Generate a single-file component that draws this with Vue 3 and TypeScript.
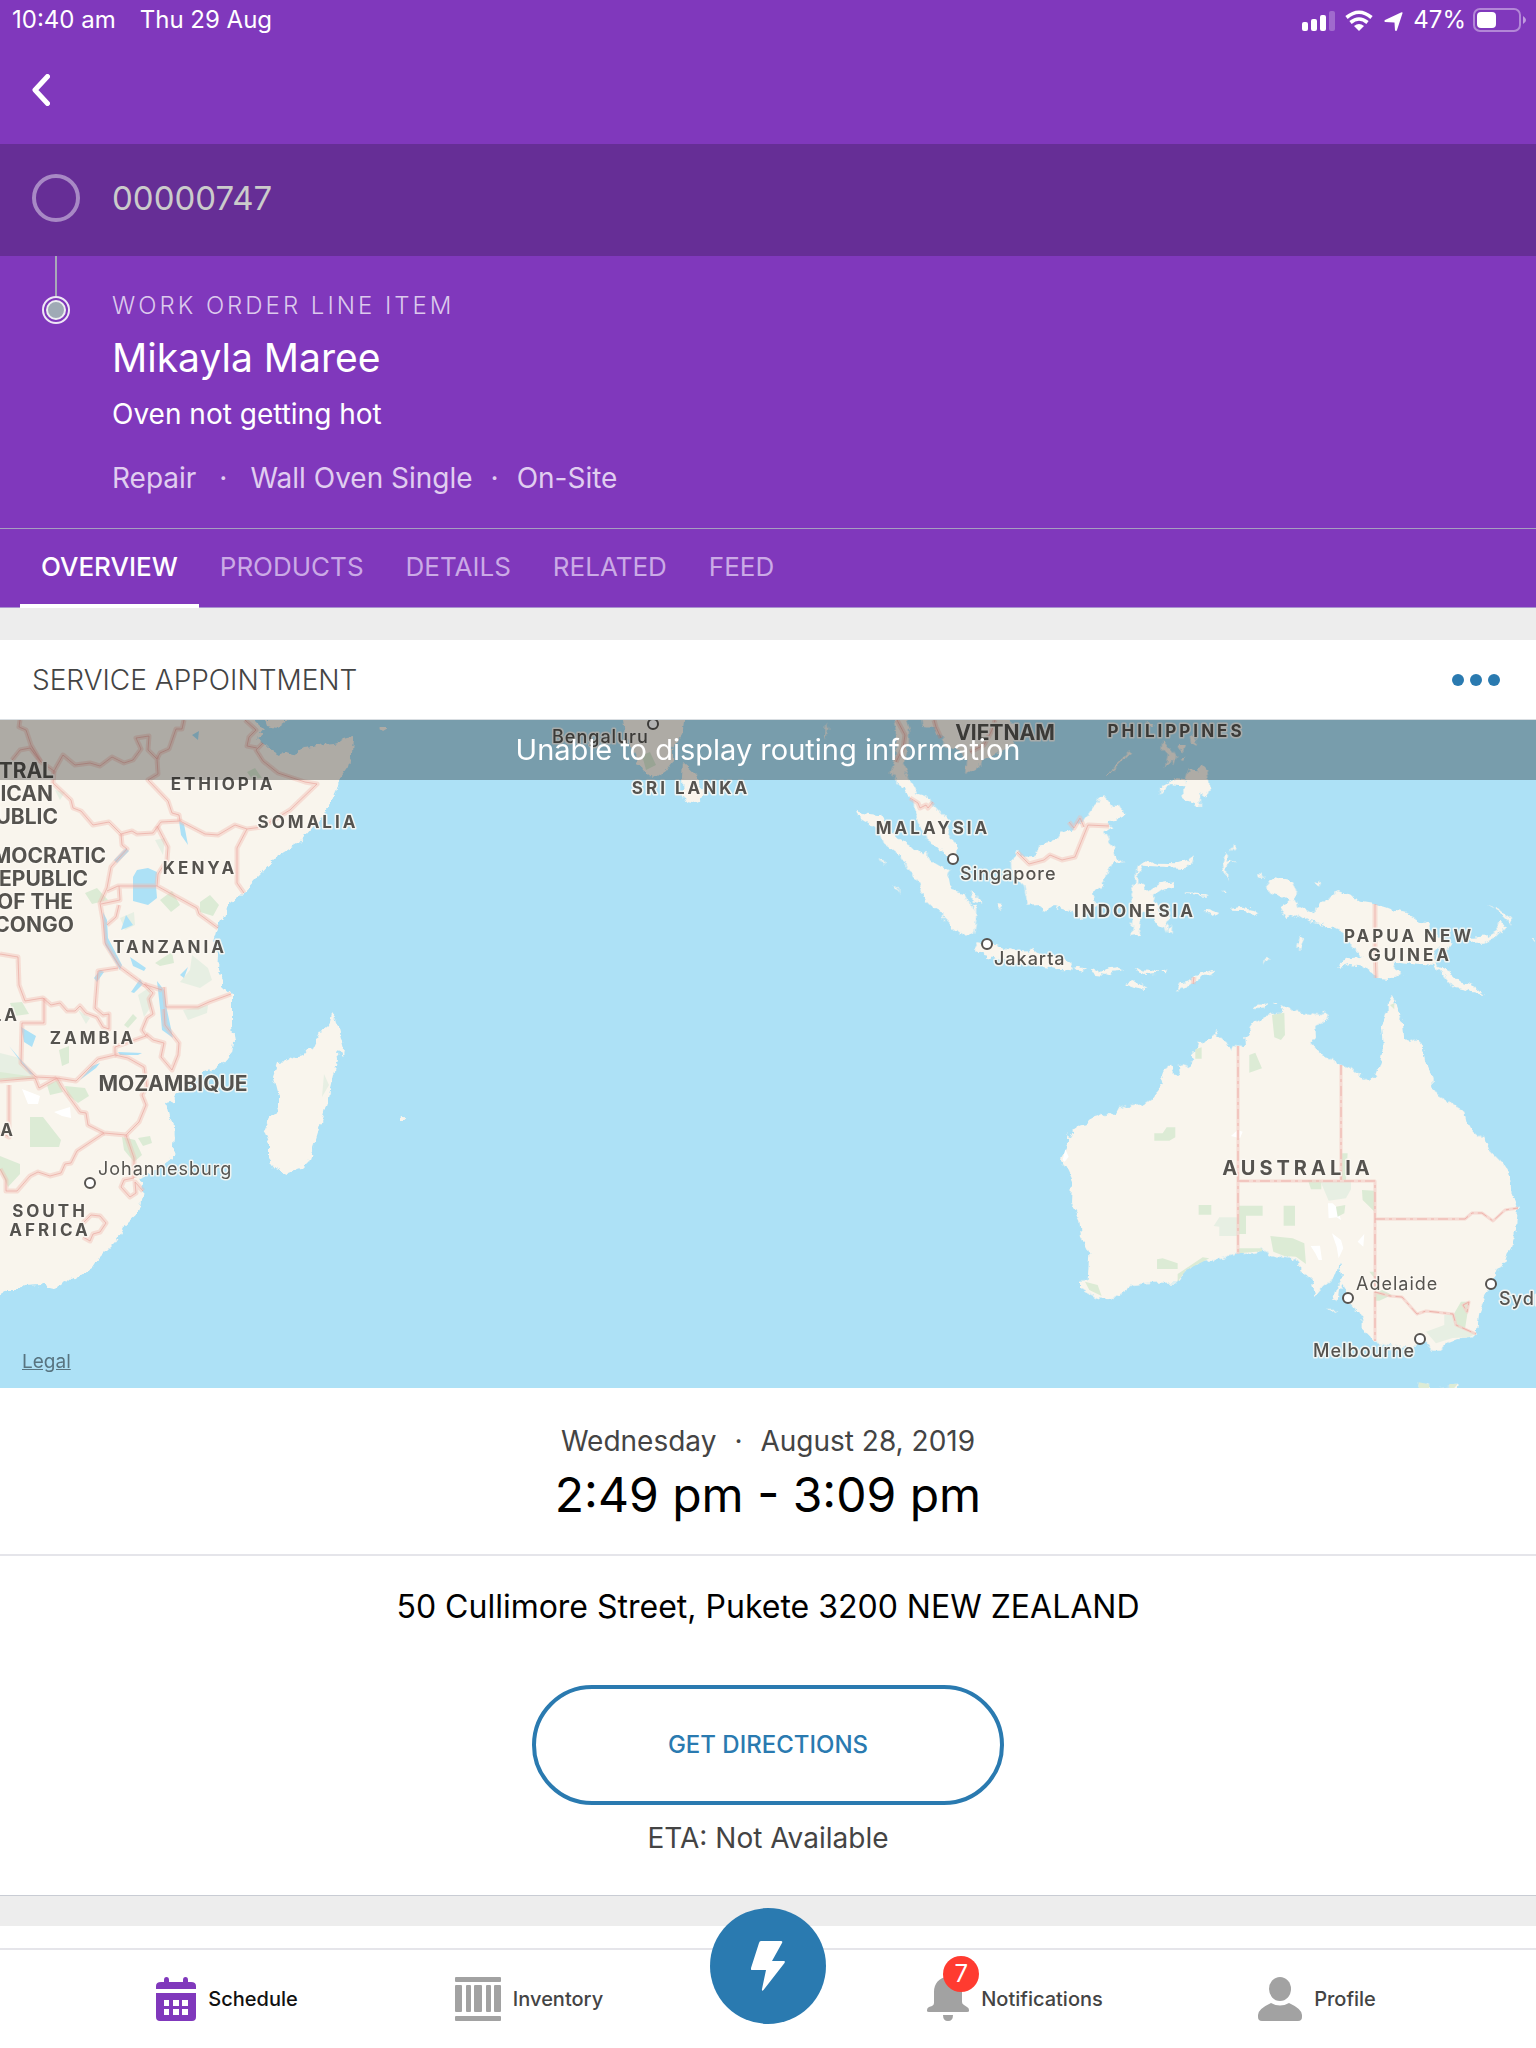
<script setup lang="ts">
import { ref } from 'vue'

interface MapLabel {
  text: string
  x: number
  y: number
  kind: 'country' | 'major' | 'continent' | 'city' | 'minor'
  anchor?: 'start' | 'middle' | 'end'
}

const tabs = ['OVERVIEW', 'PRODUCTS', 'DETAILS', 'RELATED', 'FEED']
const activeTab = ref('OVERVIEW')

const labels: MapLabel[] = [
  { text: 'CENTRAL', x: 54, y: 778, kind: 'major', anchor: 'end' },
  { text: 'AFRICAN', x: 53, y: 801, kind: 'major', anchor: 'end' },
  { text: 'REPUBLIC', x: 58, y: 824, kind: 'major', anchor: 'end' },
  { text: 'DEMOCRATIC', x: 106, y: 863, kind: 'major', anchor: 'end' },
  { text: 'REPUBLIC', x: 88, y: 886, kind: 'major', anchor: 'end' },
  { text: 'OF THE', x: 73, y: 909, kind: 'major', anchor: 'end' },
  { text: 'CONGO', x: 74, y: 932, kind: 'major', anchor: 'end' },
  { text: 'ETHIOPIA', x: 223, y: 790, kind: 'country' },
  { text: 'SOMALIA', x: 308, y: 828, kind: 'country' },
  { text: 'KENYA', x: 200, y: 874, kind: 'country' },
  { text: 'TANZANIA', x: 170, y: 953, kind: 'country' },
  { text: 'ANGOLA', x: 20, y: 1021, kind: 'country', anchor: 'end' },
  { text: 'ZAMBIA', x: 93, y: 1044, kind: 'country' },
  { text: 'MOZAMBIQUE', x: 173, y: 1091, kind: 'major' },
  { text: 'NAMIBIA', x: 16, y: 1136, kind: 'country', anchor: 'end' },
  { text: 'SOUTH', x: 50, y: 1217, kind: 'country' },
  { text: 'AFRICA', x: 50, y: 1236, kind: 'country' },
  { text: 'SRI LANKA', x: 691, y: 794, kind: 'country' },
  { text: 'VIETNAM', x: 1005, y: 740, kind: 'major' },
  { text: 'PHILIPPINES', x: 1176, y: 737, kind: 'country' },
  { text: 'MALAYSIA', x: 933, y: 834, kind: 'country' },
  { text: 'INDONESIA', x: 1135, y: 917, kind: 'country' },
  { text: 'PAPUA NEW', x: 1409, y: 942, kind: 'country' },
  { text: 'GUINEA', x: 1410, y: 961, kind: 'country' },
  { text: 'AUSTRALIA', x: 1298, y: 1175, kind: 'continent' },
  { text: 'Johannesburg', x: 98, y: 1175, kind: 'minor', anchor: 'start' },
  { text: 'Adelaide', x: 1356, y: 1290, kind: 'minor', anchor: 'start' },
  { text: 'Bengaluru', x: 552, y: 743, kind: 'city', anchor: 'start' },
  { text: 'Singapore', x: 960, y: 880, kind: 'city', anchor: 'start' },
  { text: 'Jakarta', x: 994, y: 965, kind: 'city', anchor: 'start' },
  { text: 'Melbourne', x: 1313, y: 1357, kind: 'city', anchor: 'start' },
  { text: 'Sydney', x: 1499, y: 1305, kind: 'city', anchor: 'start' },
]

const pins: [number, number][] = [
  [90, 1183], [653, 724], [953, 859], [987, 944], [1348, 1298], [1491, 1284], [1420, 1339],
]

// National borders, in map units
const borders = [
  'M20 720 19 727 26 730 31 745 41 762 54 771 63 755 75 765 90 763 100 766 112 757 124 763 133 760 141 749 136 738 149 736 148 750 157 759 158 774 148 780 168 801 172 813 179 815 180 821',
  'M12 760 20 750 30 748 41 762M184 720 182 729 176 729 169 749 160 753 157 759',
  'M54 771 53 783 71 800 73 808 81 811 93 825 109 822 121 834 132 831 137 834 153 833 161 822 180 821 205 834 218 835 235 825 247 829 262 827 290 810 317 784 305 782 278 773 263 761 256 750 263 743M245 720 256 730 249 737 247 746 257 748M247 829 237 848 237 883 244 893',
  'M121 834 122 845 127 849 111 867 107 888 100 903 103 920 105 943 120 967 143 984 162 990M157 826 168 847 167 860 158 874 157 886 118 886 107 891M157 886 197 908 199 914 218 928M119 886 120 900 101 904M119 905 116 917 107 925',
  'M0 954 18 957 19 985 25 1001 43 998 51 1005 60 1003 67 1011 75 1011 80 1006 86 1013 97 1017 103 1027 109 1029 109 1014 103 1015 95 1008 98 971 118 968',
  'M44 998 44 1023 22 1023 21 1063 36 1077 57 1078 76 1081 98 1059 115 1055 115 1047 146 1036 142 1030 147 1018 153 1014 149 999 153 993 144 984',
  'M164 987 166 1007 198 1007 209 1002 231 994M164 1009 165 1025 179 1043 178 1055 172 1070 161 1057 164 1043 153 1040 146 1034M115 1055 128 1058 144 1067 147 1087 142 1095 146 1105 139 1122 126 1135 104 1133 88 1125 86 1113 80 1112 62 1087 57 1078',
  'M0 1081 35 1078 39 1088 57 1078M9 1085 9 1137 0 1132M104 1133 77 1151 71 1163 65 1164 61 1173 50 1176 38 1172 30 1176 17 1191 6 1191 6 1180 0 1169M126 1135 134 1158 134 1178',
  'M134 1178 124 1180 121 1187 130 1197 136 1193 135 1182 143 1191M82 1224 91 1215 100 1216 106 1223 100 1232 93 1234 90 1241 83 1237',
  'M897 720 905 735 903 748 896 762M934 720 936 727 941 738M995 720 992 730 984 745 970 752M910 798 918 803 920 808 926 805 928 808 933 802',
  'M1017 852 1029 864 1044 860 1050 855 1062 860 1075 857 1088 825 1109 826M1069 822 1074 828 1080 818 1084 827M1375 904 1375 949 1376 978M1194 977 1193 984',
]

// State lines inside Australia
const stateLines =
  'M1238 1046V1254M1341 1065V1181M1239 1181H1375V1341M1375 1219H1465L1472 1213 1482 1213 1493 1221 1505 1210 1518 1208M1375 1292 1390 1296 1402 1297 1417 1314 1426 1311 1453 1314 1456 1325 1476 1334M1463 1305 1469 1302 1467 1312Z'

const coast =
  'M-10 710H245L263 728 259 733 263 736 257 739 263 743 270 750 279 755 286 752 293 754 303 748 312 747 322 744 333 743 348 739 353 738 352 753 349 760 348 767 337 783 333 797 328 807 322 818 313 827 297 845 290 849 277 857 257 878 243 893 238 898 230 903 225 917 221 921 217 928 213 943 213 951 219 955 218 970 223 979 223 987 232 995 232 1027 234 1042 232 1053 222 1065 212 1070 203 1072 187 1088 177 1095 174 1101 166 1103 170 1118 174 1125 175 1137 173 1157 157 1170 138 1178 144 1183 143 1197 139 1212 127 1223 122 1233 115 1243 100 1258 92 1268 78 1277 71 1281 65 1280 61 1284 53 1287 40 1284 25 1285 18 1290 7 1290-10 1300ZM265 720 267 726 277 728 288 720ZM380 728 389 728 384 731ZM331 1013 337 1020 340 1033 344 1049 343 1057 338 1050 336 1052 337 1060 333 1075 328 1097 322 1120 315 1143 308 1163 303 1168 297 1169 287 1173 275 1168 269 1160 269 1145 264 1133 267 1125 278 1107 278 1097 273 1077 278 1062 287 1061 293 1057 302 1055 308 1048 312 1049 317 1038 320 1036 317 1031 325 1030 328 1025ZM622 715 625 733 634 753 643 770 654 779 664 772 673 760 673 750 682 735 685 715ZM683 762 695 773 702 790 700 800 687 805 683 797 682 777Z'
</script>

<template>
  <div class="page">
    <header class="hero">
      <div class="status">
        <div class="status-group">
          <span>10:40 am</span>
          <span>Thu 29 Aug</span>
        </div>
        <div class="status-group right">
          <svg class="status-icons" width="102" height="24" viewBox="0 0 102 24" fill="#fff" aria-hidden="true">
            <rect x="0" y="14" width="6" height="9" rx="2" />
            <rect x="9" y="11" width="6" height="12" rx="2" />
            <rect x="18" y="7" width="6" height="16" rx="2" />
            <rect x="27" y="3" width="6" height="20" rx="2" opacity=".25" />
            <path d="M57 23 52 18Q57 14 62 18Z" />
            <path d="M48.500 14.500Q57 7.500 65.500 14.500M44.500 9.500Q57-1 69.500 9.500" fill="none" stroke="#fff" stroke-width="3.600" />
            <path d="M100.500 5.300 95 22Q94.500 23.500 93 22.500L92.500 14.500 83 14Q81.500 13 83 12L99 4.500Q101 4 100.500 5.300Z" />
          </svg>
          <span>47%</span>
          <svg width="54" height="24" viewBox="0 0 54 24" aria-hidden="true">
            <rect x="1" y="1" width="46" height="22" rx="6" fill="none" stroke="#fff" stroke-opacity=".4" stroke-width="2" />
            <rect x="4" y="4" width="19" height="16" rx="4" fill="#fff" />
            <path d="M50 8Q56 12 50 16Z" fill="#fff" fill-opacity=".5" />
          </svg>
        </div>
      </div>

      <div class="nav">
        <button class="back" type="button" aria-label="Back">
          <svg width="18" height="32" viewBox="0 0 18 32" fill="none" stroke="#fff" stroke-width="5" stroke-linecap="round" stroke-linejoin="round" aria-hidden="true">
            <path d="M15.500 2.500 3 16 15.500 29.500" />
          </svg>
        </button>
      </div>

      <div class="parent">
        <span class="ring"></span>
        <span class="number">00000747</span>
      </div>

      <div class="item">
        <div class="rail">
          <span class="stem"></span>
          <svg width="28" height="28" viewBox="0 0 28 28" aria-hidden="true">
            <circle cx="14" cy="14" r="13" fill="none" stroke="#eee6f6" stroke-width="2" />
            <circle cx="14" cy="14" r="9" fill="#9faab5" stroke="#eeeef2" stroke-width="2" />
          </svg>
        </div>
        <div class="summary">
          <p class="kicker">WORK ORDER LINE ITEM</p>
          <h1>Mikayla Maree</h1>
          <p class="problem">Oven not getting hot</p>
          <p class="facts"><span>Repair</span><i class="wide">·</i><span>Wall Oven Single</span><i>·</i><span>On-Site</span></p>
        </div>
      </div>

      <nav class="tabs" aria-label="Record sections">
        <button v-for="tab in tabs" :key="tab" type="button" :class="['tab', { active: tab === activeTab }]" @click="activeTab = tab">
          {{ tab }}
        </button>
      </nav>
    </header>

    <main>
      <section class="card">
        <div class="card-head">
          <h2>SERVICE APPOINTMENT</h2>
          <button class="more" type="button" aria-label="More actions">
            <svg width="48" height="12" viewBox="0 0 48 12" fill="#2a7ab0" aria-hidden="true">
              <circle cx="6" cy="6" r="6" /><circle cx="24" cy="6" r="6" /><circle cx="42" cy="6" r="6" />
            </svg>
          </button>
        </div>

        <div class="map">
          <svg class="canvas" viewBox="0 720 1536 668" role="img" aria-label="Map of the Indian Ocean">
            <defs>
              <!-- Breaks straight outlines into a ragged shoreline -->
              <filter id="shore" filterUnits="userSpaceOnUse" x="-10" y="710" width="1560" height="690">
                <feTurbulence type="fractalNoise" baseFrequency=".12" numOctaves="3" seed="4" />
                <feDisplacementMap in="SourceGraphic" scale="8" xChannelSelector="R" yChannelSelector="G" />
              </filter>
            </defs>
            <rect y="720" width="1536" height="668" fill="#ade1f6" />
            <g fill="#f9f5ed" filter="url(#shore)">
              <path :d="coast" />
              <ellipse cx="403" cy="1119" rx="3" ry="2" />
              <!-- South-East Asia -->
              <g transform="translate(820 700) scale(.4566 .3333)">
                <path d="M160 45 168 110 165 170 155 220 170 250 205 300 206 325 210 340 215 370 232 400 235 425 275 460 290 472 298 468 300 440 280 400 278 360 250 320 240 295 215 285 200 250 190 215 180 190 195 130 195 90 185 45Z" />
                <path d="M220 45 225 80 250 85 265 115 275 140 305 150 320 175 318 222 355 195 360 175 400 150 425 125 428 100 415 45Z" />
                <path d="M80 332 105 342 135 346 150 390 165 410 195 430 225 470 232 455 240 480 265 500 285 512 280 530 290 570 315 580 325 605 342 625 342 660 337 705 325 712 305 700 260 640 225 590 216 550 205 530 175 465 140 430 130 390 90 358Z" />
                <path d="M337 748 345 730 385 735 420 750 455 755 465 743 475 755 500 765 545 785 552 812 500 800 430 790 380 775 360 768Z" />
                <path d="M620 288 640 320 655 320 660 335 673 340 650 355 650 365 628 370 640 382 625 395 635 430 642 440 645 470 664 487 640 490 632 510 625 540 605 570 600 580 605 610 570 655 540 630 510 618 490 635 485 615 455 617 447 560 420 520 418 490 432 452 450 470 470 468 478 435 495 430 520 415 530 395 550 385 580 360 598 325 610 310 612 292Z" />
                <path d="M690 550 693 500 715 478 740 488 780 490 800 485 820 465 815 485 800 505 750 500 705 497 697 515 697 548 710 560 722 572 745 550 775 543 770 562 750 570 740 580 725 582 740 610 745 640 768 650 755 680 735 675 730 640 705 630 702 670 698 705 680 708 685 650 680 580Z" />
                <path d="M980 545 1000 535 1035 545 1045 570 1042 600 1048 620 1060 630 1080 640 1092 615 1110 602 1117 585 1135 573 1165 590 1185 605 1215 612 1240 622 1260 632 1285 640 1310 660 1330 672 1340 700 1385 735 1380 745 1350 750 1345 775 1355 800 1385 820 1400 845 1430 858 1452 883 1420 872 1385 862 1370 835 1345 795 1300 790 1260 785 1255 805 1275 820 1255 835 1215 830 1190 800 1160 795 1135 805 1145 785 1160 775 1190 770 1160 735 1150 700 1120 680 1070 665 1040 640 1020 655 1008 622 1030 605 1010 590 985 580Z" />
                <path d="M1420 715 1465 708 1485 692 1482 668 1493 665 1500 682 1480 710 1455 728 1430 728ZM1460 612 1490 630 1515 658 1516 678 1508 660 1488 634ZM1562 710 1568 715V732Z" />
                <path d="M782 872 792 850 815 840 830 820 872 808 850 825 830 838 805 862ZM668 850 685 843 705 852 712 868 692 862ZM555 803 570 800 582 808 575 815ZM595 815 600 805 612 815 635 808 660 803 665 812 640 815 625 828 605 825ZM692 815 705 808 730 812 745 818 710 822ZM747 818 765 808 760 820Z" />
                <path d="M845 635 855 627 872 636 862 648ZM895 628 925 620 950 628 962 645 935 634 905 632ZM1052 708 1060 715 1052 750 1045 745ZM978 768 984 772 972 792ZM905 432 910 440 900 455ZM888 458 896 470 892 485 908 480 890 500 892 525 898 545 886 520 882 490ZM955 522 970 524 970 530 958 530ZM802 580 848 583 848 587 802 585ZM1080 545 1095 552 1092 560ZM878 572 890 572 890 578Z" />
                <path d="M330 575 342 578 345 600 358 615 335 605ZM387 612 400 615 392 628ZM128 470 140 485 142 500ZM162 555 172 565 175 580ZM755 680 762 672 760 700ZM762 690 771 672 770 700Z" />
                <path d="M745 282 745 262 765 248 780 240 800 244 808 210 825 218 835 195 848 215 855 262 847 290 832 275 832 322 808 308 797 295 795 258 765 252ZM750 120 762 140 775 165 765 190 755 200 762 165 748 145ZM775 150 780 170 772 200 770 170ZM785 135 800 135 795 155ZM800 172 795 190 788 182ZM810 105 825 115 825 138 812 128ZM715 65 730 70 725 82ZM680 150 683 158 650 200 628 228 625 225 655 185ZM15 62 18 90 12 120 13 90Z" />
              </g>
              <!-- Australia -->
              <g transform="translate(1036 980) scale(.3333)">
                <path d="M97 452 93 465 108 472 115 452 135 438 150 436 172 412 195 402 235 402 242 392 268 380 330 372 345 362 360 340 385 308 378 285 385 268 403 258 415 285 425 285 432 272 428 250 460 262 475 240 465 225 480 210 483 185 500 190 510 180 540 156 558 175 575 190 585 212 590 195 615 197 630 205 628 170 645 155 640 145 655 125 690 108 735 98 740 73 770 90 820 100 855 108 865 95 876 103 860 130 838 138 840 170 825 190 840 205 870 232 890 235 915 253 950 265 965 280 985 297 1017 287 1025 265 1035 235 1043 190 1038 140 1050 98 1058 92 1058 65 1068 50 1078 60 1085 100 1100 120 1105 175 1120 182 1135 175 1160 200 1168 245 1190 290 1190 315 1198 340 1240 365 1285 395 1292 425 1308 455 1330 475 1345 470 1360 510 1400 550 1425 590 1430 640 1446 685 1440 750 1425 800 1408 850 1385 868 1370 910 1345 960 1330 1000 1322 1060 1310 1072 1260 1074 1240 1088 1215 1112 1190 1112 1165 1085 1140 1100 1080 1100 1015 1085 980 1050 980 1020 955 975 930 975 930 940 920 912 912 925 908 960 885 962 897 950 902 925 915 905 918 880 910 852 905 875 890 900 855 925 838 948 825 900 790 870 790 848 765 835 720 830 685 812 608 820 550 838 500 845 450 870 420 908 350 908 290 915 265 935 250 945 220 957 190 955 150 935 135 925 135 902 155 900 160 820 135 770 130 720 105 670 108 600 78 535 95 500Z" />
                <path d="M652 78 670 70 690 72 685 82 660 84ZM710 68 725 68 720 74ZM870 990 905 990 890 998ZM1148 1207 1180 1218 1190 1240H1148ZM1215 1222 1265 1210 1260 1240H1215Z" />
              </g>
            </g>
            <path transform="translate(1036 980) scale(.3333)" fill="#fff" d="M80 540 88 508 98 530 86 545ZM585 468 605 450 620 455 612 475ZM876 670 890 670 905 685 915 720 902 712 878 715ZM888 760 915 780 922 805 908 835 902 800ZM824 798 852 797 858 840 848 840 838 820ZM965 785 985 762 982 800Z" />
            <!-- Parks and reserves -->
            <g fill="#dcebd5">
              <path d="M160 900 172 891 180 905 171 912ZM200 902 210 895 219 905 213 916 200 912ZM85 893 97 888 108 900 92 904ZM155 963 172 952 174 963 160 966ZM10 1003 22 1002 29 1014 15 1016ZM59 1050 69 1046 69 1063 62 1066ZM124 1025 133 1014 137 1018 128 1028ZM0 1068 30 1072 35 1079 0 1080ZM47 1085 58 1080 63 1092 50 1095ZM65 1086 85 1088 89 1096 78 1103 68 1095ZM30 1117H43L61 1140 59 1147H30ZM0 1156 20 1164 20 1174 8 1187 0 1170ZM122 1137 135 1140 142 1155 134 1162 124 1150ZM138 1138 150 1136 152 1143 143 1146ZM247 772 255 768 262 778 252 779ZM642 755 650 752 656 765 646 770Z" />
              <g transform="translate(1036 980) scale(.3333)">
                <path d="M355 460H380L392 442H418V472L400 482H355ZM478 208 497 202V236H478ZM708 105 745 98 747 165 735 180 715 172ZM640 225 658 218 678 265 640 278ZM488 675H526V704H488ZM608 677H680V707H630V762H608ZM743 677H777V737H743ZM816 600H856V628H825ZM978 630 1016 632V695L980 660ZM703 768 770 775 805 790 810 852 780 830 745 828 712 815ZM608 805H678V814L608 820ZM363 838 380 835 425 850V867H363ZM425 882 500 832 520 835 500 845 450 870 425 905ZM147 905 185 915 197 948 160 930ZM1000 875 1016 875V895ZM1016 935 1040 930 1068 945 1030 962H1016ZM1255 1000 1275 965 1300 965 1285 1060 1260 1040ZM1148 1207 1180 1213 1180 1224H1148ZM1240 1212 1265 1212 1255 1224H1240ZM917 520H935L930 600H915ZM900 680 928 675 925 700 905 710ZM1062 75 1075 70 1075 88Z" />
              </g>
            </g>
            <g fill="#e7efe3">
              <path d="M192 955 208 968 212 980 200 988 180 982 190 970ZM120 918 134 912 135 925 125 930ZM138 995 150 987 152 1005 144 1017ZM183 1010 208 1005 207 1013 188 1020ZM0 1053 20 1058 36 1077 0 1072ZM324 1074 329 1085 322 1097ZM155 840 165 838 163 855ZM55 790 65 792 60 800ZM78 1010 90 1018 86 1024Z" />
              <path transform="translate(1036 980) scale(.3333)" d="M853 603H945V628L930 655 878 662ZM550 712H608V768H550V740L533 738ZM1170 1055 1225 1035 1225 1005 1255 1000 1262 1040 1322 1060 1300 1072 1250 1074 1200 1090Z" />
            </g>
            <!-- Lakes -->
            <g fill="#ade1f6">
              <path d="M133 877 137 870 148 868 157 872 156 886 157 898 148 905 133 901ZM179 821 184 824 188 845 181 835ZM114 860 126 848 129 851 117 863ZM103 912 107 920 108 938 122 965 120 970 105 945ZM126 915 133 925 121 930ZM130 957 146 968 144 971 133 966ZM180 975 188 967 184 978ZM94 978 100 970 104 972 97 982ZM131 992 140 979 143 984 134 993ZM157 981 164 990 167 1010 173 1038 162 1030 160 1008ZM80 1080 92 1066 100 1063 96 1068ZM118 1052 142 1053 138 1055 120 1055ZM21 1027 36 1036 32 1047 24 1042ZM9 1046 34 1075 30 1074ZM192 735 199 731 198 740Z" />
            </g>
            <path fill="#fff" d="M22 1089 40 1096 38 1104 28 1104ZM54 1112 70 1107 71 1118 62 1116Z" />
            <g fill="none" stroke-linejoin="round">
              <path v-for="d in borders" :key="`halo-${d}`" :d="d" stroke="#f3b9b0" stroke-opacity=".4" stroke-width="5" />
              <path v-for="d in borders" :key="d" :d="d" stroke="#e8a49d" stroke-opacity=".65" />
              <path :d="stateLines" stroke="#f5cfc7" stroke-opacity=".7" stroke-width="3" />
              <path :d="stateLines" stroke="#eba8a0" stroke-opacity=".8" stroke-dasharray="10 4 3 4" />
            </g>
            <circle v-for="[x, y] in pins" :key="`${x}-${y}`" :cx="x" :cy="y" r="5" fill="#fff" stroke="#565350" stroke-width="2" />
            <text v-for="label in labels" :key="`${label.text}-${label.y}`" :x="label.x" :y="label.y" :text-anchor="label.anchor ?? 'middle'" :class="['label', label.kind]">{{ label.text }}</text>
          </svg>
          <p class="notice">Unable to display routing information</p>
          <a class="legal" href="#legal">Legal</a>
        </div>

        <div class="when">
          <p class="date"><span>Wednesday</span><i>·</i><span>August 28, 2019</span></p>
          <p class="time">2:49 pm - 3:09 pm</p>
        </div>

        <div class="where">
          <p class="address">50 Cullimore Street, Pukete 3200 NEW ZEALAND</p>
          <button class="directions" type="button">GET DIRECTIONS</button>
          <p class="eta">ETA: Not Available</p>
        </div>
      </section>
    </main>

    <nav class="dock" aria-label="Main">
      <a class="dock-item current" href="#schedule">
        <svg width="40" height="44" viewBox="0 0 40 44" fill="#8038bc" aria-hidden="true">
          <path d="M8 5V3Q8 0 10.500 0T13 3V5H27V3Q27 0 29.500 0T32 3V5H35Q40 5 40 9V12H0V9Q0 5 5 5Z" />
          <path fill-rule="evenodd" d="M0 16H40V40Q40 44 36 44H4Q0 44 0 40ZM8 23V29H13V23ZM17 23V29H23V23ZM26 23V29H32V23ZM8 32V38H13V32ZM17 32V38H23V32ZM26 32V38H32V32Z" />
        </svg>
        <span>Schedule</span>
      </a>
      <a class="dock-item" href="#inventory">
        <svg width="46" height="44" viewBox="0 0 46 44" fill="#a2a2a2" aria-hidden="true">
          <rect width="46" height="5" rx="1" /><rect y="39" width="46" height="5" rx="1" />
          <rect y="8" width="7" height="27" rx="1" /><rect x="11" y="8" width="5" height="27" rx="1" />
          <rect x="19" y="8" width="8" height="27" rx="1" /><rect x="31" y="8" width="5" height="27" rx="1" />
          <rect x="39" y="8" width="7" height="27" rx="1" />
        </svg>
        <span>Inventory</span>
      </a>
      <button class="fab" type="button" aria-label="Quick actions">
        <svg width="34" height="50" viewBox="0 0 34 50" fill="#fff" aria-hidden="true">
          <path d="M10 0H30Q32 0 31 2L21 20H33Q34.500 20 33.500 22L12.500 49Q10.500 51 11 48L15 29H1Q-.5 29 0 27L8 2Q8.500 0 10 0Z" />
        </svg>
      </button>
      <a class="dock-item alerts" href="#notifications">
        <span class="bell">
          <svg width="42" height="44" viewBox="0 0 42 44" fill="#a2a2a2" aria-hidden="true">
            <path d="M21 0C12 0 7 7 7 15V26Q7 28 5 29L2 30Q0 31 0 33V34Q0 35 2 35H40Q42 35 42 34V33Q42 31 40 30L37 28Q35 27 35 25V15C35 7 30 0 21 0Z" />
            <path d="M16 38H26Q26 44 21 44T16 38Z" />
          </svg>
          <span class="badge">7</span>
        </span>
        <span>Notifications</span>
      </a>
      <a class="dock-item" href="#profile">
        <svg width="44" height="44" viewBox="0 0 44 44" fill="#a2a2a2" aria-hidden="true">
          <ellipse cx="22" cy="12" rx="11" ry="12" />
          <path d="M13 26Q22 31 31 26Q44 32 44 38V40Q44 44 40 44H4Q0 44 0 40V38Q0 32 13 26Z" />
        </svg>
        <span>Profile</span>
      </a>
    </nav>
  </div>
</template>

<style>
body {
  margin: 0;
}
</style>

<style scoped>
.page {
  display: flex;
  flex-direction: column;
  min-height: 100vh;
  background: #fff;
  color: #444;
  font-family: Inter, Roboto, sans-serif;
  font-size: 28px;
  line-height: 32px;
}

p,
h1,
h2 {
  margin: 0;
  font-weight: 400;
}

i {
  display: inline-block;
  width: 44px;
  font-style: normal;
  text-align: center;
}

button {
  padding: 0;
  border: 0;
  background: none;
  font: inherit;
  cursor: pointer;
}

svg {
  display: block;
}

.hero {
  background: #8038bc;
  color: #fff;
}

.status {
  display: flex;
  justify-content: space-between;
  height: 40px;
  padding: 0 9px 0 12px;
  font-size: 24px;
  line-height: 24px;
}

.status-group {
  display: flex;
  align-items: center;
  gap: 24px;
}

.status-group.right {
  gap: 7px;
}

.status-icons {
  margin-right: 2px;
}

.nav {
  display: flex;
  align-items: center;
  height: 104px;
  padding: 0 32px;
}

.back {
  margin-bottom: 4px;
}

.parent {
  display: flex;
  align-items: center;
  gap: 32px;
  height: 112px;
  padding: 0 32px 4px;
  box-sizing: border-box;
  background: #662e96;
}

.ring {
  width: 48px;
  height: 48px;
  box-sizing: border-box;
  border: 4px solid #a889c5;
  border-radius: 50%;
}

.number {
  color: #cbcbcb;
  font-size: 33px;
}

.item {
  display: flex;
  gap: 32px;
  padding: 0 32px 34px;
}

.rail {
  display: flex;
  flex-direction: column;
  align-items: center;
  width: 48px;
}

.stem {
  width: 2px;
  height: 40px;
  background: #a8a8b8;
}

.summary {
  padding-top: 34px;
}

.kicker {
  color: #dcc9ed;
  font-size: 24px;
  font-weight: 300;
  letter-spacing: 3px;
}

h1 {
  padding: 12px 0 16px;
  font-size: 39px;
  line-height: 48px;
}

.facts {
  padding-top: 32px;
  color: #e0cdf0;
}

.facts .wide {
  width: 54px;
}

.tabs {
  display: flex;
  border-top: 1px solid #a79fc0;
  padding: 0 20px;
  box-shadow: inset 0 -1px #a993cf;
}

.tab {
  height: 79px;
  padding: 0 21px;
  border-bottom: 4px solid transparent;
  color: #cbaae6;
  font-size: 26px;
}

.tab.active {
  border-bottom-color: #fff;
  color: #fff;
  font-weight: 500;
}

main {
  flex: 1;
  padding: 32px 0 22px;
  background: linear-gradient(#fff, #fff) bottom / 100% 22px no-repeat #ededed;
}

.card {
  background: #fff;
  border-bottom: 1px solid #c8ccd4;
  margin-bottom: 30px;
}

.card-head {
  display: flex;
  align-items: center;
  justify-content: space-between;
  height: 79px;
  padding: 0 36px 0 32px;
  border-bottom: 1px solid #d9dee2;
}

h2 {
  font-size: 28px;
  font-weight: 300;
}

.map {
  position: relative;
}

.canvas {
  width: 100%;
}

.label {
  fill: #55534f;
  stroke: #fbf8f2;
  stroke-width: 3px;
  stroke-opacity: 0.85;
  stroke-linejoin: round;
  paint-order: stroke;
  font-weight: 700;
}

.country {
  font-size: 17px;
  letter-spacing: 3px;
}

.major {
  font-size: 21px;
}

.continent {
  font-size: 20px;
  letter-spacing: 4px;
}

.city {
  font-size: 18px;
  font-weight: 500;
  letter-spacing: 1px;
}

.minor {
  font-size: 18px;
  font-weight: 400;
  letter-spacing: 1px;
}

.notice {
  position: absolute;
  inset: 0 0 auto;
  padding: 14px 0;
  background: rgba(0, 0, 0, 0.3);
  color: #fff;
  font-size: 29px;
  text-align: center;
}

.legal {
  position: absolute;
  bottom: 14px;
  left: 22px;
  color: #587480;
  font-size: 19px;
  line-height: 24px;
}

.when {
  padding: 37px 0 31px;
  border-bottom: 2px solid #e5e5ea;
  text-align: center;
}

.time {
  padding-top: 10px;
  color: #000;
  font-size: 48px;
  line-height: 56px;
}

.where {
  display: flex;
  flex-direction: column;
  align-items: center;
  padding: 31px 0 41px;
}

.address {
  color: #000;
  font-size: 32px;
  line-height: 40px;
}

.directions {
  width: 472px;
  height: 120px;
  margin: 58px 0 17px;
  border: 4px solid #2a7ab0;
  border-radius: 60px;
  color: #2a7ab0;
  font-size: 24px;
  font-weight: 500;
}

.dock {
  position: sticky;
  bottom: 0;
  display: grid;
  grid-template-columns: 302fr 302fr 184fr 302fr 302fr;
  align-items: center;
  height: 98px;
  padding: 0 68px 0 76px;
  border-top: 2px solid #e5e5ea;
  background: #fff;
}

.dock-item {
  display: flex;
  align-items: center;
  justify-content: center;
  gap: 12px;
  color: #444;
  font-size: 20px;
  font-weight: 500;
  line-height: 24px;
  text-decoration: none;
}

.dock-item.current {
  color: #111;
}

.dock-item.alerts {
  grid-column: 4;
}

.bell {
  position: relative;
}

.badge {
  position: absolute;
  top: -21px;
  left: 16px;
  width: 36px;
  height: 36px;
  border-radius: 50%;
  background: #ff3b30;
  color: #fff;
  font-size: 24px;
  font-weight: 400;
  line-height: 36px;
  text-align: center;
}

.fab {
  position: absolute;
  top: -42px;
  left: calc(50% - 58px);
  display: flex;
  align-items: center;
  justify-content: center;
  width: 116px;
  height: 116px;
  border-radius: 50%;
  background: #2a7ab0;
}
</style>
